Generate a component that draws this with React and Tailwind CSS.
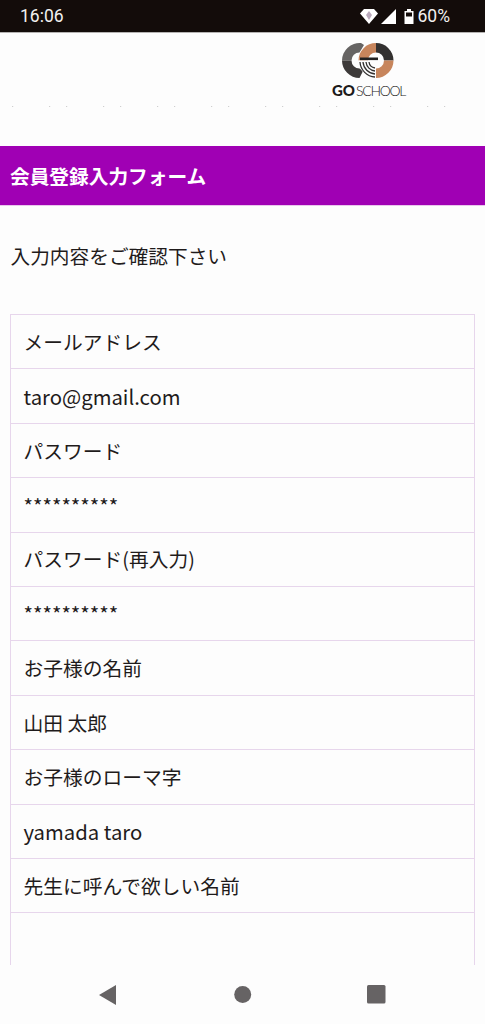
const rows = [
  { t: "メールアドレス" },
  { t: "taro@gmail.com", latin: true },
  { t: "パスワード" },
  { t: "**********", latin: true },
  { t: "パスワード(再入力)" },
  { t: "**********", latin: true },
  { t: "お子様の名前" },
  { t: "山田 太郎" },
  { t: "お子様のローマ字" },
  { t: "yamada taro", latin: true },
  { t: "先生に呼んで欲しい名前" },
  { t: "" },
];
const dots = [12, 49, 66, 103, 120, 157, 174, 211, 228, 265, 282, 319, 336, 373, 390, 427, 444];

function Logo() {
  return (
    <svg width="54" height="36" viewBox="0 0 54 36" className="block ml-[10px]">
      <path d="M19 .1A17.5 17.5 0 0 0 0 17.5H9.5A8 8 0 0 1 17.5 9.5L22 2Z" fill="#666463" />
      <path d="M0 17.5A17.5 17.5 0 0 0 17.5 35L21 28 17.5 25.5A8 8 0 0 1 9.5 17.5Z" fill="#3d3a39" />
      <path d="M34 0A17.5 17.5 0 0 0 16.5 17.5H26A8 8 0 0 1 34 9.5Z" fill="#c7855c" />
      <path d="M34 0A17.5 17.5 0 0 1 51.5 17.5H42A8 8 0 0 0 34 9.5Z" fill="#333130" />
      <path d="M51.5 17.5A17.5 17.5 0 0 1 34 35V25.5A8 8 0 0 0 42 17.5Z" fill="#c7855c" />
      <path d="M16.5 17.5A17.5 17.5 0 0 0 34 35V17.5Z" fill="#fdfdfd" />
      <path d="M18 19A16 16 0 0 0 33 34M21 19A13 13 0 0 0 33 31M24 19A10 10 0 0 0 33 28M27 19A7 7 0 0 0 33 25" fill="none" stroke="#333130" strokeWidth="1.3" />
      <rect x="18" y="14.5" width="18" height="2.6" fill="#222" />
    </svg>
  );
}

export default function App() {
  return (
    <div className="h-[1024px] w-[485px] overflow-hidden flex flex-col bg-[#fdfdfd] text-[#1f1b1b] font-['Noto_Sans_CJK_JP','Noto_Sans',sans-serif]">
      <div className="h-[33px] shrink-0 bg-[#130c0a] border-b border-[#b5b3b2] flex items-center justify-between pl-5 pr-[35px] text-[#f2f1f1] text-[17.5px] font-normal font-['Roboto',sans-serif]">
        <span>16:06</span>
        <div className="flex items-center">
          <svg width="18" height="15" viewBox="0 0 18 15" className="mr-[3px]">
            <path d="M0 4.5 4 0H14L18 4.5 9 15Z" fill="#fff" />
            <path d="M9 2 12 6 9 11 6 6Z" fill="#b9a9bb" />
          </svg>
          <svg width="15" height="15" viewBox="0 0 15 15" className="mr-[8px]">
            <path d="M15 0V15H0Z" fill="#fff" />
          </svg>
          <svg width="10" height="15" viewBox="0 0 10 15" className="mr-[4px]">
            <path d="M3 0H7V2H9.5V15H.5V2H3Z" fill="#fff" />
            <rect x="2" y="3.5" width="6" height="4" fill="#130c0a" />
          </svg>
          <span>60%</span>
        </div>
      </div>

      <div className="flex-1 min-h-0 overflow-hidden">
        <div className="h-[80px] flex justify-end pr-[79px] pt-[10px] relative">
          <div className="flex flex-col items-start w-[74px]">
            <Logo />
            <div className="flex items-baseline text-[#1c1a1a] leading-[13px] mt-[5px] font-['Lato',sans-serif] whitespace-nowrap">
              <span className="text-[15px] font-black mr-[1px]">GO</span>
              <span className="text-[14px] tracking-[-1.3px] font-light">SCHOOL</span>
            </div>
          </div>
          <svg width="485" height="1" className="absolute left-0 top-[73px]">
            {dots.map((x) => (
              <rect key={x} x={x} y="0" width="1.2" height="1" fill="#cfcfcf" />
            ))}
          </svg>
        </div>

        <div className="mt-[33px] h-[60px] bg-[#a000b4] border-b border-[#e8c6ec] flex items-center pl-[10px] text-white font-bold text-[19.7px]">
          会員登録入力フォーム
        </div>

        <p className="mt-[36px] pl-[10.5px] text-[19.7px] leading-[28px]">入力内容をご確認下さい</p>

        <div className="mx-[10px] mt-[44px] border-l border-r border-t border-[#e7d6ec]">
          {rows.map((r, i) => (
            <div
              key={i}
              className={
                r.latin
                  ? "h-[54.4px] border-b border-[#e7d6ec] flex items-center pl-[12.5px] text-[20.3px] whitespace-nowrap"
                  : "h-[54.4px] border-b border-[#e7d6ec] flex items-center pl-[12.5px] text-[19.75px] whitespace-nowrap"
              }
            >
              {r.t}
            </div>
          ))}
        </div>
      </div>

      <div className="h-[59px] shrink-0 bg-[#fdfdfd] flex items-center relative">
        <svg width="485" height="59" viewBox="0 0 485 59">
          <path d="M99 30 116 20V40Z" fill="#666364" />
          <circle cx="242.7" cy="29.5" r="8.5" fill="#666364" />
          <rect x="367" y="20" width="18.5" height="18.5" rx="1.5" fill="#666364" />
        </svg>
      </div>
    </div>
  );
}
